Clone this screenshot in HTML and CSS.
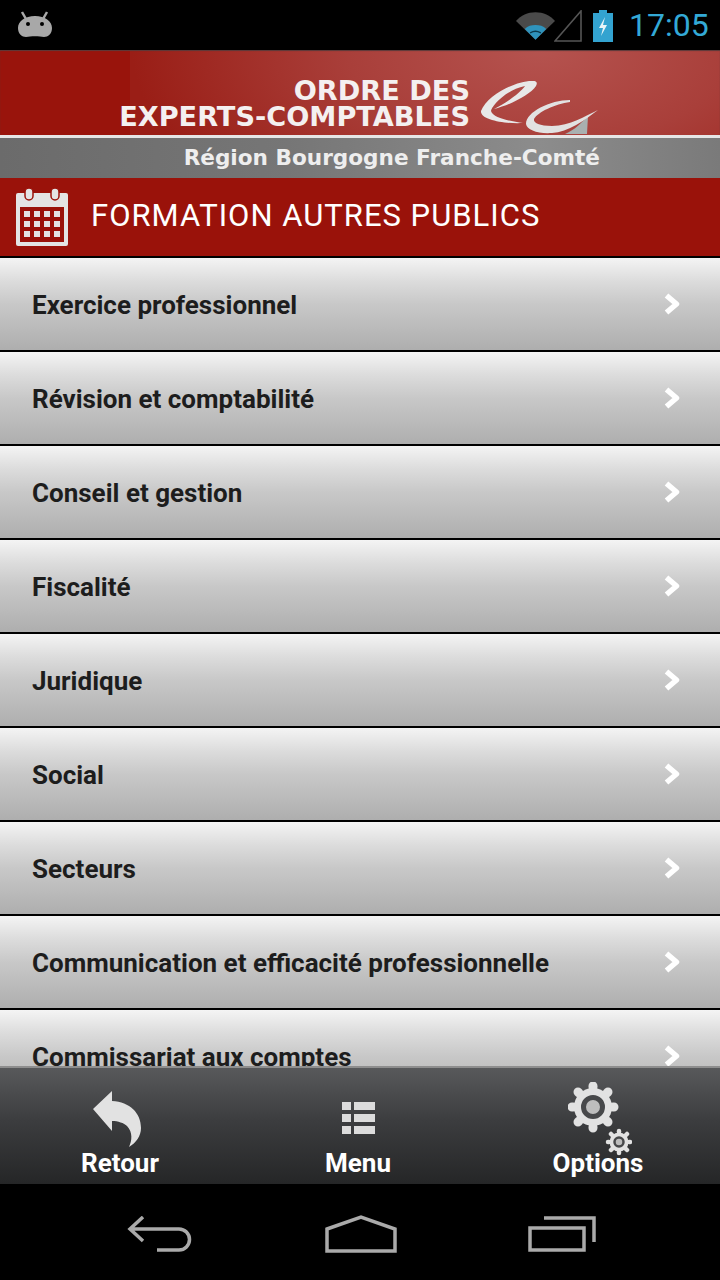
FILE: index.html
```html
<!DOCTYPE html>
<html lang="fr">
<head>
<meta charset="utf-8">
<title>Formation autres publics</title>
<link rel="stylesheet" href="styles.css">
</head>
<body>
<div class="app">
  <header class="status">
    <svg class="android" width="36" height="28" viewBox="0 0 36 28"><path d="M5 1l4 7M30 1l-4 7" stroke="#a8a8a8" stroke-width="2.500"/><path d="M1 17C1 10 8 5 18 5s17 5 17 12c0 6-4 9-8 9l-4-.5c-3-.5-7-.5-10 0L9 26c-4 0-8-3-8-9z" fill="#a8a8a8"/><circle cx="11" cy="13" r="2" fill="#000"/><circle cx="25" cy="13" r="2" fill="#000"/></svg>
    <div class="status-right">
      <svg width="39" height="30" viewBox="0 0 40 30"><path d="M0 11C5 5 12 2 20 2s15 3 20 9L20 30z" fill="#4a4a4a"/><path d="M9 19c3-3 7-4 11-4s8 1 11 4L20 30z" fill="#2f93bc"/><path d="M14.500 23c2-1 3.500-1.500 5.500-1.500s3.500.5 5.500 1.500" stroke="#0b3a4d" stroke-width="1.500" fill="none"/></svg>
      <svg class="signal" width="28" height="32" viewBox="0 0 28 32"><path d="M1 31L27 1v30z" fill="none" stroke="#555" stroke-width="1.600"/></svg>
      <svg class="battery" width="20" height="32" viewBox="0 0 20 32"><path d="M6 0h8v3h6v29H0V3h6z" fill="#33a3d0"/><path d="M12 7l-6 11h4l-2 8 6-11h-4z" fill="#e8f4f8"/></svg>
      <span class="clock">17:05</span>
    </div>
  </header>

  <div class="banner">
    <div class="banner-top">
      <div class="logo-text">
        <div class="logo-line">ORDRE DES</div>
        <div class="logo-line">EXPERTS-COMPTABLES</div>
      </div>
      <svg class="logo-ec" width="122" height="55" viewBox="0 0 122 55"><path d="M53 1C38 0 8 14 1 31c-1 9 24 13 42 12-13-2-30-5-32-12 0-4 14-21 34-25-5 7-20 18-31 23 16-4 36-14 42-23 2-4 0-5-3-5z" fill="#e8e8e8"/><path d="M108 36l-1 18H85c10-4 17-12 23-18z" fill="#a9b0b0"/><path d="M90 20C70 20 46 32 46 44c1 6 12 10 26 9 16-1 33-13 46-23-13 6-28 16-46 16-12 0-19-3-18-7 4-7 21-15 36-17z" fill="#e2e2e2"/></svg>
    </div>
    <div class="banner-bottom">Région Bourgogne Franche-Comté</div>
  </div>

  <div class="title-bar">
    <svg class="calendar" width="54" height="60" viewBox="0 0 54 60">
      <rect x="1" y="6" width="52" height="53" rx="2" fill="#e4e4e4"/>
      <rect x="5" y="20" width="44" height="35" fill="#9a120a"/>
      <rect x="10" y="1" width="8" height="12" rx="4" fill="#e4e4e4" stroke="#9a120a" stroke-width="1.500"/>
      <rect x="36" y="1" width="8" height="12" rx="4" fill="#e4e4e4" stroke="#9a120a" stroke-width="1.500"/>
      <g fill="#e4e4e4">
        <rect x="9" y="24" width="6" height="6"/><rect x="19" y="24" width="6" height="6"/><rect x="29" y="24" width="6" height="6"/><rect x="39" y="24" width="6" height="6"/>
        <rect x="9" y="34" width="6" height="6"/><rect x="19" y="34" width="6" height="6"/><rect x="29" y="34" width="6" height="6"/><rect x="39" y="34" width="6" height="6"/>
        <rect x="9" y="44" width="6" height="6"/><rect x="19" y="44" width="6" height="6"/><rect x="29" y="44" width="6" height="6"/><rect x="39" y="44" width="6" height="6"/>
      </g>
    </svg>
    <h1 class="title">FORMATION AUTRES PUBLICS</h1>
  </div>

  <main class="list">
    <div class="row"><span>Exercice professionnel</span><svg class="chev" width="18" height="24" viewBox="0 0 18 24"><path d="M3.500 3.500l10 8.500-10 8.500" fill="none" stroke="#fff" stroke-width="5.500" stroke-linejoin="round"/></svg></div>
    <div class="row"><span>Révision et comptabilité</span><svg class="chev" width="18" height="24" viewBox="0 0 18 24"><path d="M3.500 3.500l10 8.500-10 8.500" fill="none" stroke="#fff" stroke-width="5.500" stroke-linejoin="round"/></svg></div>
    <div class="row"><span>Conseil et gestion</span><svg class="chev" width="18" height="24" viewBox="0 0 18 24"><path d="M3.500 3.500l10 8.500-10 8.500" fill="none" stroke="#fff" stroke-width="5.500" stroke-linejoin="round"/></svg></div>
    <div class="row"><span>Fiscalité</span><svg class="chev" width="18" height="24" viewBox="0 0 18 24"><path d="M3.500 3.500l10 8.500-10 8.500" fill="none" stroke="#fff" stroke-width="5.500" stroke-linejoin="round"/></svg></div>
    <div class="row"><span>Juridique</span><svg class="chev" width="18" height="24" viewBox="0 0 18 24"><path d="M3.500 3.500l10 8.500-10 8.500" fill="none" stroke="#fff" stroke-width="5.500" stroke-linejoin="round"/></svg></div>
    <div class="row"><span>Social</span><svg class="chev" width="18" height="24" viewBox="0 0 18 24"><path d="M3.500 3.500l10 8.500-10 8.500" fill="none" stroke="#fff" stroke-width="5.500" stroke-linejoin="round"/></svg></div>
    <div class="row"><span>Secteurs</span><svg class="chev" width="18" height="24" viewBox="0 0 18 24"><path d="M3.500 3.500l10 8.500-10 8.500" fill="none" stroke="#fff" stroke-width="5.500" stroke-linejoin="round"/></svg></div>
    <div class="row"><span>Communication et efficacité professionnelle</span><svg class="chev" width="18" height="24" viewBox="0 0 18 24"><path d="M3.500 3.500l10 8.500-10 8.500" fill="none" stroke="#fff" stroke-width="5.500" stroke-linejoin="round"/></svg></div>
    <div class="row"><span>Commissariat aux comptes</span><svg class="chev" width="18" height="24" viewBox="0 0 18 24"><path d="M3.500 3.500l10 8.500-10 8.500" fill="none" stroke="#fff" stroke-width="5.500" stroke-linejoin="round"/></svg></div>
  </main>

  <nav class="toolbar">
    <div class="tool tool-back">
      <svg class="back-icon" width="48" height="56" viewBox="0 0 48 56"><path d="M0 18L19 0v10c18 1 29 12 29 27 0 8-5 15-12 19 3-6 4-15-2-21-3-3-9-5-15-5v10z" fill="#e2e2e2"/></svg>
      <span class="tool-label">Retour</span>
    </div>
    <div class="tool tool-menu">
      <svg class="menu-icon" width="34" height="34" viewBox="0 0 34 34" fill="#dcdcdc"><rect x="0" y="0" width="9" height="8"/><rect x="12" y="0" width="21" height="8"/><rect x="0" y="12" width="9" height="8"/><rect x="12" y="12" width="21" height="8"/><rect x="0" y="24" width="9" height="8"/><rect x="12" y="24" width="21" height="8"/></svg>
      <span class="tool-label">Menu</span>
    </div>
    <div class="tool tool-options">
      <svg class="gears" width="64" height="74" viewBox="0 0 64 74">
        <circle cx="25" cy="25" r="19" fill="#e2e2e2"/>
        <path d="M25 5v-1M25 45v1M5 25h-1M45 25h1M11 11l-1-1M39 39l1 1M39 11l1-1M11 39l-1 1" stroke="#e2e2e2" stroke-width="9" stroke-linecap="round"/>
        <circle cx="25" cy="25" r="9.500" fill="#bdbdbd" stroke="#47484a" stroke-width="5"/>
        <circle cx="51" cy="60" r="9.500" fill="#e2e2e2"/>
        <path d="M51 50v-1M51 70v1M41 60h-1M61 60h1M44 53l-1-1M58 67l1 1M58 53l1-1M44 67l-1 1" stroke="#e2e2e2" stroke-width="4.500" stroke-linecap="round"/>
        <circle cx="51" cy="60" r="4.500" fill="#bdbdbd" stroke="#47484a" stroke-width="2.500"/>
      </svg>
      <span class="tool-label">Options</span>
    </div>
  </nav>

  <footer class="navbar">
    <svg width="66" height="36" viewBox="0 0 66 36" fill="none" stroke="#aaa" stroke-width="3.500"><path d="M16 1L3 13l13 12M3 13h49a10.500 10.500 0 0 1 0 21H30"/></svg>
    <svg width="72" height="38" viewBox="0 0 72 38" fill="none" stroke="#aaa" stroke-width="3.500"><path d="M2 14L36 2l34 12v22H2z"/></svg>
    <svg width="68" height="36" viewBox="0 0 68 36" fill="none" stroke="#aaa" stroke-width="3.500"><path d="M16 2h50v24"/><path d="M2 12h54v22H2z"/></svg>
  </footer>
</div>
</body>
</html>
```
FILE: styles.css
```css
* { box-sizing: border-box; }
html, body { margin: 0; padding: 0; }
body { background: #000; font-family: Roboto, "Liberation Sans", sans-serif; }
.app { width: 720px; height: 1280px; display: flex; flex-direction: column; overflow: hidden; }

.status { height: 50px; flex: none; background: #000; display: flex; align-items: center; justify-content: space-between; padding: 0 12px 0 17px; }
.android { margin-top: -1px; }
.status-right { display: flex; align-items: center; }
.signal { margin-left: -1px; margin-top: 2px; }
.battery { margin-left: 11px; margin-top: 1px; }
.clock { margin-left: 16px; color: #33a9d6; font-size: 32px; line-height: 50px; width: 79px; }

.banner { height: 128px; flex: none; display: flex; flex-direction: column; }
.banner-top { height: 88px; flex: none; display: flex; align-items: flex-start; padding: 28px 0 0 119px; border-bottom: 3px solid #e6e6e6; background: radial-gradient(ellipse 480px 240px at 410px 0, #b5534f 0%, #a93f3a 40%, #9a1e16 85%, #9a1e16 100%) 130px 0 / 590px 100% no-repeat, #99140c; box-shadow: inset 0 1px 1px #5a3a3a; }
.logo-text { width: 351px; text-align: right; color: #f4f0f0; font-family: "DejaVu Sans", "Liberation Sans", sans-serif; font-weight: 700; font-size: 27.200px; line-height: 26px; }
.logo-line { height: 26px; white-space: nowrap; }
.logo-ec { flex: none; margin: 2px 0 0 10px; }
.banner-bottom { height: 40px; flex: none; text-align: right; padding-right: 120px; color: #eeeeee; font-family: "DejaVu Sans", "Liberation Sans", sans-serif; font-weight: 700; font-size: 21.600px; line-height: 39px; white-space: nowrap; background: linear-gradient(90deg, #6b6b6b 0%, #767676 40%, #8c8c8c 75%, #7a7a7a 100%); }

.title-bar { height: 80px; flex: none; display: flex; align-items: center; padding: 0 0 2px 15px; background: #9a120a; border-bottom: 2px solid #000; }
.calendar { flex: none; margin-top: 2px; }
.title { margin: 0 0 0 22px; color: #fff; font-weight: 400; font-size: 31px; line-height: 40px; letter-spacing: 1px; white-space: nowrap; }

.list { flex: 1; min-height: 0; overflow: hidden; background: #fff; }
.row { height: 94px; display: flex; align-items: center; justify-content: space-between; padding: 0 39px 0 32px; background: linear-gradient(180deg, #f4f4f4 0%, #dcdcdc 25%, #c8c8c8 50%, #aeaeae 100%); border-bottom: 2px solid #000; color: #1d1d1d; font-weight: 700; font-size: 26px; }
.row span { padding-top: 2px; }

.toolbar { height: 118px; flex: none; display: flex; background: linear-gradient(180deg, #58595b 0%, #3c3d3f 45%, #252627 100%); border-top: 2px solid #8e8e8e; }
.tool { flex: none; display: flex; flex-direction: column; align-items: center; position: relative; height: 116px; color: #fff; }
.tool-back { width: 240px; padding-top: 23px; }
.back-icon { margin-right: 6px; }
.tool-menu { width: 236px; padding-top: 34px; }
.menu-icon { margin-left: 2px; }
.tool-options { width: 244px; padding-top: 14px; }
.tool-label { position: absolute; top: 78px; left: 0; right: 0; text-align: center; font-size: 26px; line-height: 34px; font-weight: 700; }
.gears { margin-left: 4px; }

.navbar { height: 96px; flex: none; background: #000; display: flex; align-items: center; padding: 4px 124px 0 127px; justify-content: space-between; }
```
